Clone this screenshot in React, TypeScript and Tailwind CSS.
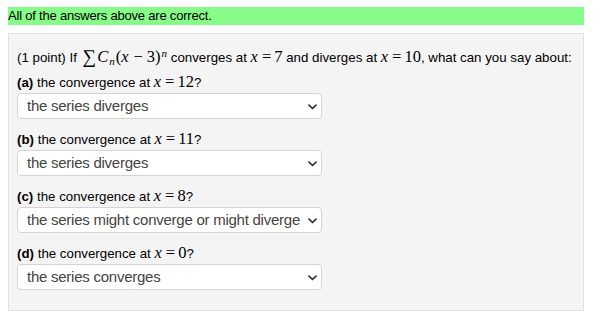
import { useState } from "react";

const mathFont = { fontFamily: '"Liberation Serif", "DejaVu Serif", serif' };

function V({ children }: { children: React.ReactNode }) {
  return (
    <span className="italic text-[16.5px] mr-[1px]" style={mathFont}>
      {children}
    </span>
  );
}

function N({ children }: { children: React.ReactNode }) {
  return (
    <span className="text-[16.5px]" style={mathFont}>
      {children}
    </span>
  );
}

function Eq({ value }: { value: string }) {
  return (
    <>
      <V>x</V>
      <span className="text-[16.5px] mx-[3px]" style={mathFont}>
        =
      </span>
      <N>{value}</N>
    </>
  );
}

const options = [
  "?",
  "the series converges",
  "the series diverges",
  "the series might converge or might diverge",
];

const parts = [
  { key: "a", at: "12", answer: "the series diverges" },
  { key: "b", at: "11", answer: "the series diverges" },
  { key: "c", at: "8", answer: "the series might converge or might diverge" },
  { key: "d", at: "0", answer: "the series converges" },
];

function Dropdown({ initial }: { initial: string }) {
  const [val, setVal] = useState(initial);
  return (
    <div className="relative w-[305px] h-[26px]">
      <select
        value={val}
        onChange={(e) => setVal(e.target.value)}
        className="appearance-none w-full h-full bg-white border border-[#d4d4d4] rounded-[4px] pl-[9px] pr-5 text-[15px] tracking-[-0.25px] text-[#444] outline-none"
      >
        {options.map((o) => (
          <option key={o} value={o}>
            {o}
          </option>
        ))}
      </select>
      <svg
        className="absolute right-[5px] top-[11px] pointer-events-none"
        width="9"
        height="6"
        viewBox="0 0 9 6"
        fill="none"
      >
        <path d="M1 1.2l3.5 3.3 3.5-3.3" stroke="#333" strokeWidth="1.7" strokeLinecap="round" strokeLinejoin="round" />
      </svg>
    </div>
  );
}

export default function App() {
  return (
    <div
      className="min-h-[322px] bg-white p-2 pt-[7px] text-[13.3px] text-black"
      style={{ fontFamily: '"Liberation Sans", Arial, sans-serif' }}
    >
      {/* result banner */}
      <div className="w-[576px] h-[18px] bg-[#88fc88] leading-[18px] text-[13px] tracking-[-0.2px]">
        All of the answers above are correct.
      </div>

      {/* problem panel */}
      <div className="mt-2 w-[576px] h-[278px] bg-[#f4f4f4] border border-[#e2e2e2] pl-[8px] pt-[11px]">
        <p className="leading-[22px] whitespace-nowrap">
          (1 point) If{" "}
          <span className="text-[19px] ml-[2px] mr-[1px] relative top-[1px]" style={mathFont}>
            ∑
          </span>
          <V>C</V>
          <sub className="italic text-[11px] mr-[1px]" style={mathFont}>
            n
          </sub>
          <N>(</N>
          <V>x</V>
          <span className="text-[16.5px] mx-[4px]" style={mathFont}>
            −
          </span>
          <N>3)</N>
          <sup className="italic text-[11px] ml-[1px]" style={mathFont}>
            n
          </sup>{" "}
          converges at <Eq value="7" /> and diverges at <Eq value="10" />, what can you say about:
        </p>

        <div className="mt-[3px] flex flex-col gap-[10px]">
          {parts.map((p) => (
            <div key={p.key} className="flex flex-col gap-[1px]">
              <div className="leading-[20px] h-[20px]">
                <b>({p.key})</b> the convergence at <Eq value={p.at} />?
              </div>
              <Dropdown initial={p.answer} />
            </div>
          ))}
        </div>
      </div>
    </div>
  );
}
